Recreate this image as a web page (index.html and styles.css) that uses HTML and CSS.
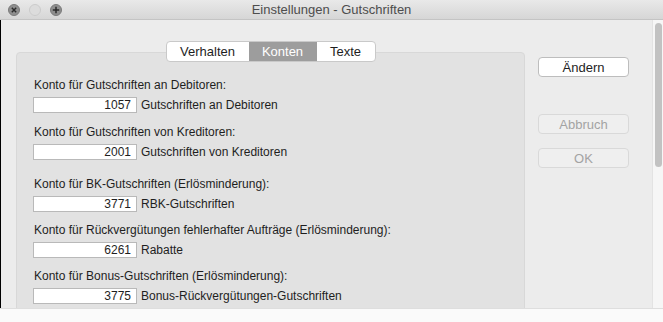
FILE: index.html
```html
<!DOCTYPE html>
<html lang="de">
<head>
  <meta charset="UTF-8">
  <title>Einstellungen - Gutschriften</title>
  <link rel="stylesheet" href="styles.css">
</head>
<body>
  <div class="window">
    <div class="titlebar">
      <div class="lights">
        <svg class="light" width="12" height="12" viewBox="0 0 12 12">
          <circle cx="6" cy="6" r="5.5" fill="#8e8e8e" stroke="#7a7a7a"/>
          <path d="M3.8 3.8 L8.2 8.2 M8.2 3.8 L3.8 8.2" stroke="#2b2b2b" stroke-width="1.4"/>
        </svg>
        <svg class="light" width="12" height="12" viewBox="0 0 12 12">
          <circle cx="6" cy="6" r="5.5" fill="#dcdcdc" stroke="#cbcbcb"/>
        </svg>
        <svg class="light" width="12" height="12" viewBox="0 0 12 12">
          <circle cx="6" cy="6" r="5.5" fill="#8e8e8e" stroke="#7a7a7a"/>
          <path d="M6 2.8 V9.2 M2.8 6 H9.2" stroke="#2b2b2b" stroke-width="1.5"/>
        </svg>
      </div>
      <div class="title">Einstellungen - Gutschriften</div>
    </div>

    <div class="content">
      <div class="pane">
        <div class="main">
          <div class="tabs">
            <span class="tab">Verhalten</span>
            <span class="tab active">Konten</span>
            <span class="tab">Texte</span>
          </div>
          <div class="group">
            <div class="field first">
              <label>Konto für Gutschriften an Debitoren:</label>
              <div class="line"><span class="num">1057</span><span class="desc">Gutschriften an Debitoren</span></div>
            </div>
            <div class="field wide">
              <label>Konto für Gutschriften von Kreditoren:</label>
              <div class="line"><span class="num">2001</span><span class="desc">Gutschriften von Kreditoren</span></div>
            </div>
            <div class="field">
              <label>Konto für BK-Gutschriften (Erlösminderung):</label>
              <div class="line"><span class="num">3771</span><span class="desc">RBK-Gutschriften</span></div>
            </div>
            <div class="field">
              <label>Konto für Rückvergütungen fehlerhafter Aufträge (Erlösminderung):</label>
              <div class="line"><span class="num">6261</span><span class="desc">Rabatte</span></div>
            </div>
            <div class="field">
              <label>Konto für Bonus-Gutschriften (Erlösminderung):</label>
              <div class="line"><span class="num">3775</span><span class="desc">Bonus-Rückvergütungen-Gutschriften</span></div>
            </div>
          </div>
        </div>

        <div class="buttons">
          <button class="btn">Ändern</button>
          <button class="btn disabled">Abbruch</button>
          <button class="btn disabled">OK</button>
        </div>
      </div>
      <div class="vscroll"><div class="thumb"></div></div>
    </div>

    <div class="hbar"></div>
  </div>
</body>
</html>
```

FILE: styles.css
```css
body {
  margin: 0;
  font-family: "Liberation Sans", Arial, sans-serif;
  color: #1e1e1e;
}
.window {
  width: 663px;
  height: 322px;
  background: #ececec;
  overflow: hidden;
}
.titlebar {
  height: 19px;
  border-bottom: 1px solid #c4c4c4;
  background: linear-gradient(#e9e9e9, #d6d6d6);
  display: flex;
  align-items: center;
  position: relative;
}
.lights {
  display: flex;
  gap: 9px;
  margin-left: 8px;
}
.light {
  display: block;
}
.title {
  position: absolute;
  left: 0;
  right: 0;
  text-align: center;
  font-size: 13px;
  color: #4d4d4d;
}
.content {
  display: flex;
  height: 288px;
  border-left: 1px solid #000;
}
.pane {
  flex: 1;
  display: flex;
  overflow: hidden;
}
.main {
  width: 509px;
  margin-left: 15px;
  padding-top: 21px;
}
.tabs {
  display: flex;
  width: 208px;
  height: 19px;
  margin: 0 auto -10px;
  border: 1px solid #c9c9c9;
  border-radius: 4px;
  background: #fff;
  overflow: hidden;
  position: relative;
  font-size: 13px;
}
.tab {
  display: flex;
  align-items: center;
  justify-content: center;
  color: #1e1e1e;
}
.tab:nth-child(1) { width: 82px; }
.tab:nth-child(2) { width: 68px; }
.tab:nth-child(3) { flex: 1; }
.tab.active {
  background: #9d9d9d;
  color: #fff;
}
.group {
  background: #e2e2e2;
  border: 1px solid #d8d8d8;
  border-radius: 4px;
  padding: 25px 0 40px 16px;
  font-size: 12px;
}
.field {
  margin-bottom: 11px;
}
.field.first {
  margin-bottom: 12px;
}
.field.wide {
  margin-bottom: 17px;
}
.field label {
  display: block;
  line-height: 14px;
  margin-bottom: 5px;
  padding-left: 1px;
}
.line {
  display: flex;
  align-items: center;
}
.num {
  width: 97px;
  height: 14px;
  line-height: 14px;
  padding-right: 5px;
  border: 1px solid #b9b9b9;
  background: #fff;
  text-align: right;
}
.desc {
  margin-left: 4px;
}
.buttons {
  display: flex;
  flex-direction: column;
  margin-left: 13px;
  padding-top: 37px;
}
.btn {
  width: 91px;
  height: 20px;
  padding: 0;
  border: 1px solid #bdbdbd;
  border-radius: 4px;
  background: #fff;
  font-family: inherit;
  font-size: 13px;
  color: #1e1e1e;
}
.btn.disabled {
  margin-top: 14px;
  background: #efefef;
  border-color: #d9d9d9;
  color: #a3a3a3;
}
.btn.disabled:nth-child(2) {
  margin-top: 37px;
}
.vscroll {
  width: 10px;
  border-left: 1px solid #e3e3e3;
  background: #f6f6f6;
  padding-top: 3px;
}
.thumb {
  width: 7px;
  height: 144px;
  margin-left: 2px;
  border-radius: 4px;
  background: #c2c2c2;
}
.hbar {
  height: 13px;
  border-top: 1px solid #dedede;
  background: #fafafa;
}
```
